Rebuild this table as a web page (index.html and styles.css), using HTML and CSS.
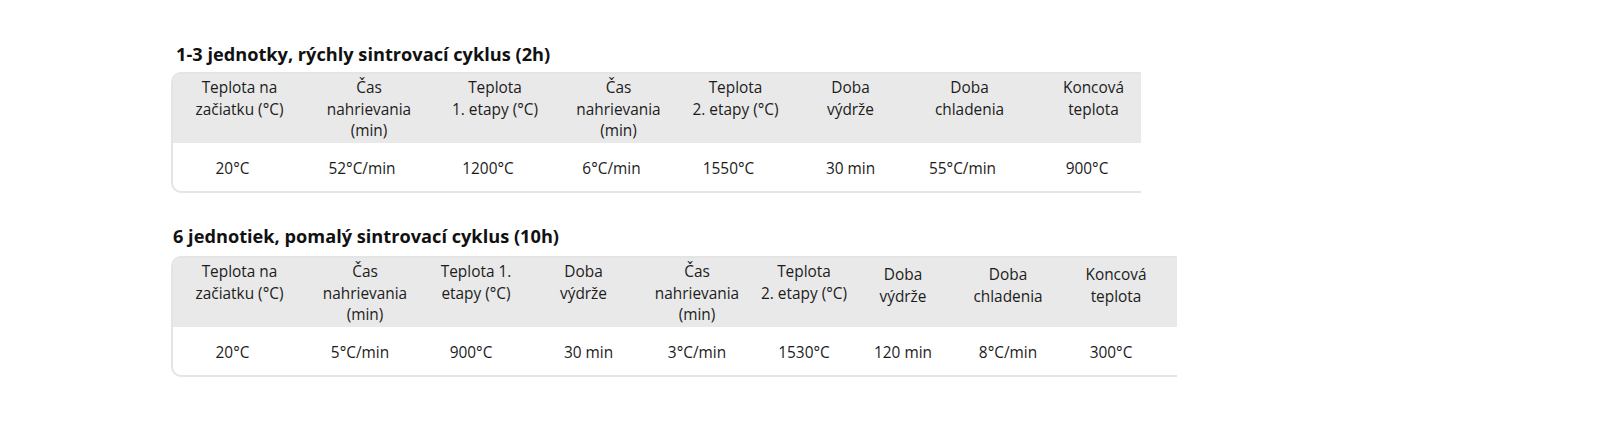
FILE: index.html
```html
<!DOCTYPE html>
<html lang="sk">
<head>
<meta charset="utf-8">
<title>Sintrovacie cykly</title>
<link rel="stylesheet" href="styles.css">
</head>
<body>
<main class="page">
  <section class="block block-1">
    <h2 class="title t1">1-3 jednotky, rýchly sintrovací cyklus (2h)</h2>
    <div class="wrap w1">
      <table class="tbl">
        <colgroup>
          <col class="c133"><col class="c126"><col class="c126"><col class="c121"><col class="c113"><col class="c117"><col class="c121"><col class="c111">
        </colgroup>
        <thead>
          <tr>
            <th>Teplota na<br>začiatku (°C)</th>
            <th>Čas<br>nahrievania<br>(min)</th>
            <th>Teplota<br>1. etapy (°C)</th>
            <th>Čas<br>nahrievania<br>(min)</th>
            <th>Teplota<br>2. etapy (°C)</th>
            <th>Doba<br>výdrže</th>
            <th>Doba<br>chladenia</th>
            <th class="pl8">Koncová<br>teplota</th>
          </tr>
        </thead>
        <tbody>
          <tr>
            <td class="sl">20°C</td>
            <td class="sl">52°C/min</td>
            <td class="sl">1200°C</td>
            <td class="sl">6°C/min</td>
            <td class="sl">1550°C</td>
            <td>30 min</td>
            <td class="sl">55°C/min</td>
            <td class="pl3">900°C</td>
          </tr>
        </tbody>
      </table>
    </div>
  </section>

  <section class="block block-2">
    <h2 class="title t2">6 jednotiek, pomalý sintrovací cyklus (10h)</h2>
    <div class="wrap w2">
      <table class="tbl">
        <colgroup>
          <col class="c133"><col class="c118"><col class="c104"><col class="c111"><col class="c116"><col class="c98"><col class="c100"><col class="c110"><col class="c114">
        </colgroup>
        <thead>
          <tr>
            <th>Teplota na<br>začiatku (°C)</th>
            <th>Čas<br>nahrievania<br>(min)</th>
            <th>Teplota 1.<br>etapy (°C)</th>
            <th>Doba<br>výdrže</th>
            <th>Čas<br>nahrievania<br>(min)</th>
            <th>Teplota<br>2. etapy (°C)</th>
            <th class="low">Doba<br>výdrže</th>
            <th class="low">Doba<br>chladenia</th>
            <th class="low pr8">Koncová<br>teplota</th>
          </tr>
        </thead>
        <tbody>
          <tr>
            <td class="sl">20°C</td>
            <td class="sl2">5°C/min</td>
            <td class="sl2">900°C</td>
            <td class="sr">30 min</td>
            <td>3°C/min</td>
            <td>1530°C</td>
            <td>120 min</td>
            <td>8°C/min</td>
            <td class="pr18">300°C</td>
          </tr>
        </tbody>
      </table>
    </div>
  </section>
</main>
</body>
</html>
```

FILE: styles.css
```css
* { box-sizing: border-box; }

html, body {
  margin: 0;
  padding: 0;
  background: #ffffff;
}

body {
  font-family: "Open Sans", "Noto Sans", "Liberation Sans", sans-serif;
  color: #1c1c1c;
  font-size: 15.4px;
  line-height: 21.5px;
}

.page {
  padding: 42px 0 0 171px;
}

.block-2 {
  margin-top: 31px;
}

.title {
  margin: 0;
  font-size: 18.2px;
  font-weight: 700;
  line-height: 24px;
  color: #111111;
}

.t1 { padding-left: 5px; margin-bottom: 6px; }
.t2 { padding-left: 2px; margin-bottom: 8px; }

.wrap {
  border: 2px solid #e4e4e4;
  border-right: none;
  border-radius: 10px 0 0 10px;
  overflow: hidden;
  display: inline-block;
  vertical-align: top;
}

.tbl {
  border-collapse: collapse;
  table-layout: fixed;
}

.w1 .tbl { width: 967px; }
.w2 .tbl { width: 1004px; }

.c133 { width: 133px; }
.c126 { width: 126px; }
.c121 { width: 121px; }
.c118 { width: 118px; }
.c117 { width: 117px; }
.c116 { width: 116px; }
.c114 { width: 114px; }
.c113 { width: 113px; }
.c111 { width: 111px; }
.c110 { width: 110px; }
.c104 { width: 104px; }
.c100 { width: 100px; }
.c98 { width: 98px; }

.tbl thead th {
  background: #e9e9e9;
  font-weight: 400;
  text-align: center;
  vertical-align: top;
  padding: 3px 2px 0 2px;
  height: 69px;
  white-space: nowrap;
}

.tbl thead th.low {
  padding-top: 6px;
}

.tbl tbody td {
  text-align: center;
  vertical-align: top;
  padding: 15px 2px 11.5px 2px;
  height: 48px;
  white-space: nowrap;
}

.tbl th.pl8 { padding-left: 18px; }
.tbl th.pr8 { padding-right: 10px; }

.tbl tbody td.sl { padding-right: 16px; }
.tbl tbody td.sl2 { padding-right: 12px; }
.tbl tbody td.sr { padding-left: 12px; }
.tbl tbody td.pl3 { padding-left: 5px; }
.tbl tbody td.pr18 { padding-right: 20px; }
```
